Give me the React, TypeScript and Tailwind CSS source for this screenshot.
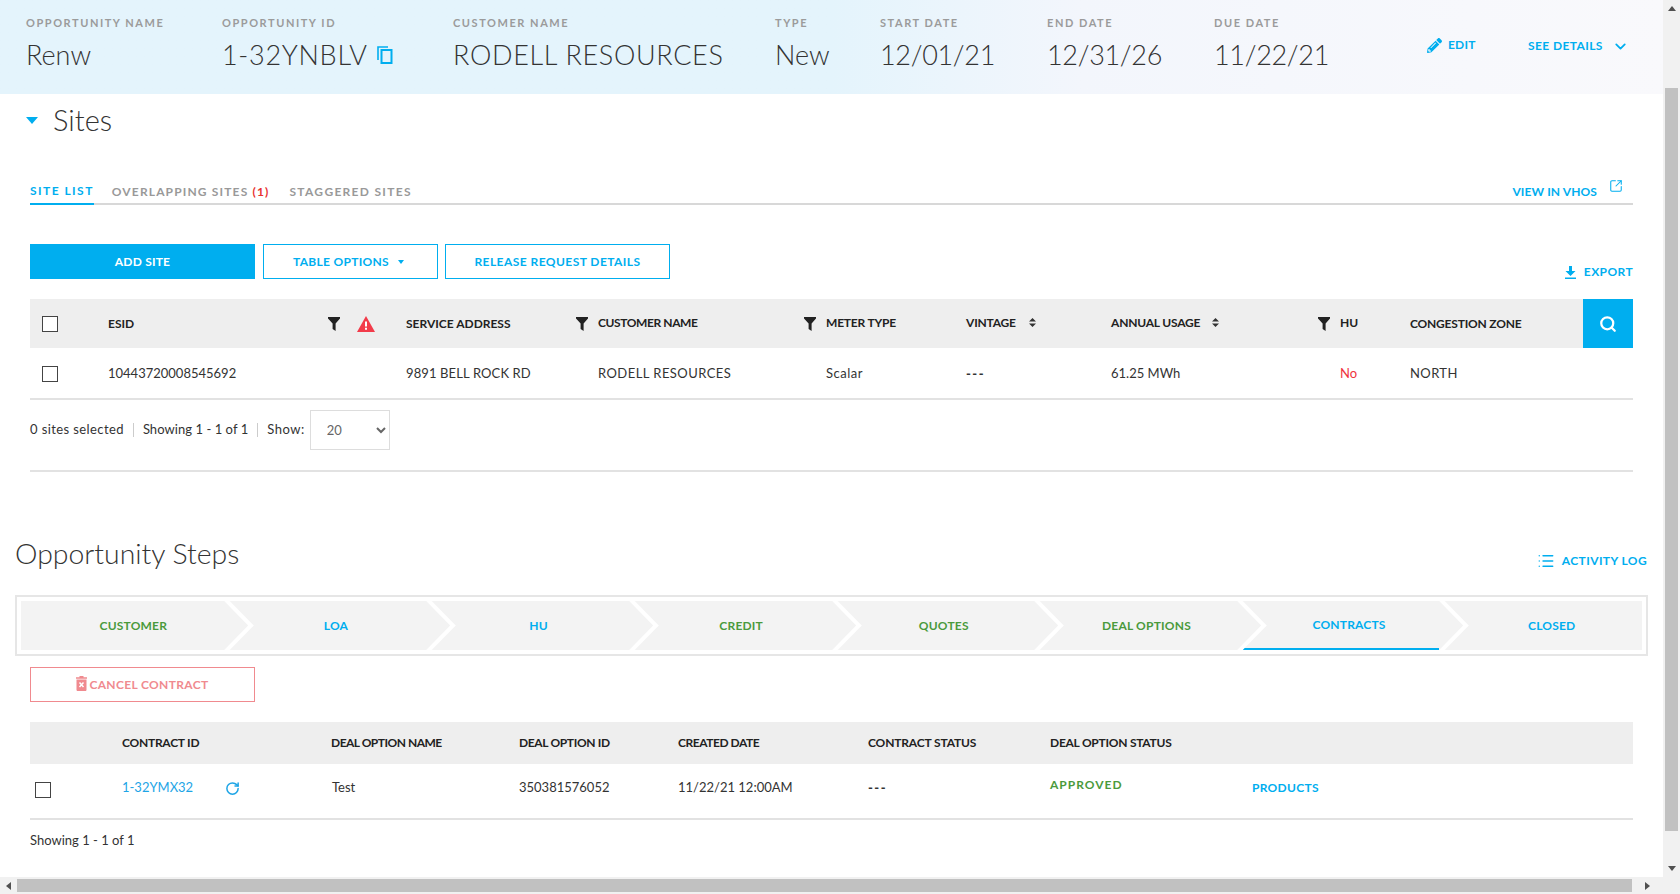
import React from 'react';
import { ChevronDown, List, RotateCw, Search, SquareArrowOutUpRight } from 'lucide-react';
import { FaPencilAlt } from 'react-icons/fa';

const summary = [
  { label: 'OPPORTUNITY NAME', value: 'Renw', cls: 'w-[196px]', track: '' },
  { label: 'OPPORTUNITY ID', value: '1-32YNBLV', cls: 'w-[231px]', track: 'tracking-[0.7px]', copy: true },
  { label: 'CUSTOMER NAME', value: 'RODELL RESOURCES', cls: 'w-[322px]', track: 'tracking-[0.67px]' },
  { label: 'TYPE', value: 'New', cls: 'w-[105px]', track: '' },
  { label: 'START DATE', value: '12/01/21', cls: 'w-[167px]', track: 'tracking-[-0.3px]' },
  { label: 'END DATE', value: '12/31/26', cls: 'w-[167px]', track: 'tracking-[-0.3px]' },
  { label: 'DUE DATE', value: '11/22/21', cls: 'w-[213px]', track: 'tracking-[-0.3px]' },
];

const steps = [
  { name: 'CUSTOMER', color: 'text-[#4a9a3c]' },
  { name: 'LOA', color: 'text-[#00aeef]' },
  { name: 'HU', color: 'text-[#00aeef]' },
  { name: 'CREDIT', color: 'text-[#4a9a3c]' },
  { name: 'QUOTES', color: 'text-[#4a9a3c]' },
  { name: 'DEAL OPTIONS', color: 'text-[#4a9a3c]' },
  { name: 'CONTRACTS', color: 'text-[#00aeef]', active: true },
  { name: 'CLOSED', color: 'text-[#00aeef]' },
];

const sitesGrid =
  'grid grid-cols-[78px_220px_29px_49px_170px_22px_206px_22px_140px_145px_207px_22px_70px_173px_50px] items-center';
const contractsGrid = 'grid grid-cols-[92px_210px_187px_159px_190px_182px_202px_1fr] items-center';

function Funnel() {
  return (
    <svg width="12" height="14" viewBox="0 0 12 14" className="text-[#222]">
      <path d="M0 0H12V1.6L7.6 6.6V14L4.6 12V6.6L0 1.6Z" fill="currentColor" />
    </svg>
  );
}

function SortArrows() {
  return (
    <svg width="7" height="9" viewBox="0 0 7 9" className="text-[#333]">
      <path d="M3.5 0L7 3.6H0ZM3.5 9L0 5.4H7Z" fill="currentColor" />
    </svg>
  );
}

function Box() {
  return <div className="w-4 h-4 border border-[#444] bg-white"></div>;
}

function Th({ children, className = '' }: { children?: React.ReactNode; className?: string }) {
  return <div className={`text-[12px] font-bold text-[#222] ${className}`}>{children}</div>;
}

export default function App() {
  return (
    <div className="w-[1680px] h-[894px] overflow-hidden flex flex-col bg-white font-['Lato',sans-serif] text-[#333]">
      <div className="flex flex-1 min-h-0">
        <div className="w-[1663px] shrink-0">
          {/* Opportunity summary */}
          <div className="h-[94px] flex pl-[26px] pt-4 bg-gradient-to-r from-[#e4f4fc] from-50% via-[#f3f6fc] via-65% to-[#f9f9fc]">
            {summary.map(item => (
              <div key={item.label} className={item.cls}>
                <div className="text-[11px] leading-[14px] font-bold tracking-[1.55px] text-[#9b9b9b]">{item.label}</div>
                <div className={`mt-[7px] flex items-center text-[27px] leading-[36px] font-light text-[#333] ${item.track}`}>
                  {item.value}
                  {item.copy && (
                    <svg width="16" height="18" viewBox="0 0 16 18" fill="none" className="ml-[9px] text-[#00aeef]">
                      <path d="M1 14V1H11" stroke="currentColor" strokeWidth="1.6" />
                      <rect x="4.5" y="4" width="10" height="13" stroke="currentColor" strokeWidth="2" />
                    </svg>
                  )}
                </div>
              </div>
            ))}
            <div className="flex items-center gap-[6px] w-[101px] h-[20px] mt-[19px] text-[12px] font-bold text-[#00aeef] tracking-[0.2px]">
              <FaPencilAlt className="w-[15px] h-[15px]" />
              EDIT
            </div>
            <div className="flex items-center gap-[9px] h-[20px] mt-[20px] text-[12px] font-bold text-[#00aeef] tracking-[0.4px]">
              SEE DETAILS
              <ChevronDown className="w-[17px] h-[17px] mt-[1px]" strokeWidth={2.5} />
            </div>
          </div>

          {/* Sites */}
          <div className="flex items-center h-[40px] mt-[6px] pl-[26px]">
            <svg width="12" height="7" viewBox="0 0 12 7" className="text-[#00aeef]">
              <path d="M0 0H12L6 7Z" fill="currentColor" />
            </svg>
            <span className="ml-[15px] text-[29px] font-light text-[#333]">Sites</span>
          </div>

          <div className="ml-[30px] w-[1603px]">
            <div className="mt-[39px] h-[26px] flex items-end border-b-2 border-[#d8d8d8]">
              <div className="h-[26px] -mb-[2px] border-b-2 border-[#00aeef] text-[12px] leading-[24px] font-bold tracking-[1.45px] text-[#00aeef]">
                SITE LIST
              </div>
              <div className="ml-[18px] h-[26px] text-[12px] leading-[30px] font-bold tracking-[1.15px] text-[#999]">
                OVERLAPPING SITES <span className="text-[#e8312f]">(1)</span>
              </div>
              <div className="ml-[20px] h-[26px] text-[12px] leading-[30px] font-bold tracking-[1.3px] text-[#999]">
                STAGGERED SITES
              </div>
              <div className="ml-auto h-[26px] flex items-start pr-[10px] gap-[12px] text-[12px] leading-[30px] font-bold tracking-[0.1px] text-[#00aeef]">
                VIEW IN VHOS
                <SquareArrowOutUpRight className="w-[14px] h-[14px] mt-[2px]" strokeWidth={1.8} />
              </div>
            </div>

            <div className="mt-[39px] flex items-start">
              <div className="w-[225px] h-[35px] flex items-center justify-center bg-[#00aeef] text-white text-[12px] font-bold tracking-[0.2px]">
                ADD SITE
              </div>
              <div className="ml-[8px] w-[175px] h-[35px] flex items-center justify-center gap-[9px] border border-[#00aeef] pr-[4px] text-[#00aeef] text-[12px] font-bold tracking-[0.3px]">
                TABLE OPTIONS
                <svg width="6" height="4" viewBox="0 0 6 4" className="text-[#00aeef]">
                  <path d="M0 0H6L3 4Z" fill="currentColor" />
                </svg>
              </div>
              <div className="ml-[7px] w-[225px] h-[35px] flex items-center justify-center border border-[#00aeef] text-[#00aeef] text-[12px] font-bold tracking-[0.45px]">
                RELEASE REQUEST DETAILS
              </div>
              <div className="ml-auto mt-[19px] flex items-center gap-[8px] text-[12px] leading-[18px] font-bold text-[#00aeef] tracking-[0.4px]">
                <svg width="11" height="13" viewBox="0 0 11 13" className="text-[#00aeef]">
                  <path d="M4 0H7V5H10.5L5.5 10L0.5 5H4ZM0 11.6H11V13H0Z" fill="currentColor" />
                </svg>
                EXPORT
              </div>
            </div>

            {/* Sites table */}
            <div className={`mt-[18px] h-[49px] bg-[#eeeeee] ${sitesGrid}`}>
              <div className="pl-3"><Box /></div>
              <Th>ESID</Th>
              <Funnel />
              <svg width="18" height="16" viewBox="0 0 18 16">
                <path d="M9 0L18 16H0Z" fill="#f23b4a" />
                <path d="M8 5.5H10V10.5H8ZM8 11.8H10V13.8H8Z" fill="#ffffff" />
              </svg>
              <Th>SERVICE ADDRESS</Th>
              <Funnel />
              <Th className="-mt-[2px] tracking-[-0.4px]">CUSTOMER NAME</Th>
              <Funnel />
              <Th className="-mt-[2px] tracking-[-0.2px]">METER TYPE</Th>
              <Th className="-mt-[2px] flex items-center gap-[13px] tracking-[-0.2px]">VINTAGE <SortArrows /></Th>
              <Th className="-mt-[2px] flex items-center gap-[12px] tracking-[-0.2px]">ANNUAL USAGE <SortArrows /></Th>
              <Funnel />
              <Th className="-mt-[2px]">HU</Th>
              <Th className="tracking-[-0.2px]">CONGESTION ZONE</Th>
              <div className="h-[49px] flex items-center justify-center bg-[#00aeef] text-white">
                <Search className="w-[18px] h-[18px]" strokeWidth={3} />
              </div>
            </div>
            <div className={`h-[52px] pt-[2px] border-b-2 border-[#e2e2e2] text-[13px] text-[#333] ${sitesGrid}`}>
              <div className="pl-3"><Box /></div>
              <div className="col-span-3">10443720008545692</div>
              <div className="col-span-2 tracking-[0.12px]">9891 BELL ROCK RD</div>
              <div className="col-span-2 tracking-[0.45px]">RODELL RESOURCES</div>
              <div className="tracking-[0.5px]">Scalar</div>
              <div className="font-black tracking-[1.5px]">---</div>
              <div className="col-span-2">61.25 MWh</div>
              <div className="text-[#ef3340]">No</div>
              <div className="col-span-2 tracking-[0.4px]">NORTH</div>
            </div>

            <div className="h-[72px] pb-[10px] flex items-center border-b-2 border-[#e2e2e2] text-[13px] text-[#333]">
              <span className="tracking-[0.4px]">0 sites selected</span>
              <span className="mx-[9px] h-[14px] border-l border-[#ccc]"></span>
              <span className="tracking-[0.05px]">Showing 1 - 1 of 1</span>
              <span className="mx-[9px] h-[14px] border-l border-[#ccc]"></span>
              <span className="tracking-[0.5px]">Show:</span>
              <select defaultValue="20" className="ml-[5px] w-[80px] h-[40px] pl-[12px] rounded-none border border-[#ddd] bg-white text-[13px] text-[#666] outline-none">
                <option value="20">20</option>
              </select>
            </div>
          </div>

          {/* Opportunity steps */}
          <div className="mt-[61px] ml-[15px] w-[1632px] h-[40px] flex items-center justify-between">
            <span className="text-[28.4px] font-light text-[#333]">Opportunity Steps</span>
            <span className="flex items-center gap-[7px] mt-[16px] text-[12px] font-bold text-[#00aeef] tracking-[0.4px]">
              <List className="w-[18px] h-[18px]" strokeWidth={1.8} />
              ACTIVITY LOG
            </span>
          </div>

          <div className="mt-[22px] ml-[15px] w-[1633px] h-[61px] border-2 border-[#e6e6e6] p-[4px] flex">
            {steps.map((step, i) => (
              <div key={step.name} className="relative flex-1 h-[49px] bg-[#f3f3f3] flex items-center justify-center pl-[22px]">
                <span className={`text-[12px] font-bold tracking-[0.2px] ${step.color} ${step.active ? '-mt-[2px]' : ''}`}>{step.name}</span>
                {step.active && <div className="absolute left-[6px] right-0 bottom-0 h-[2px] bg-[#00aeef]"></div>}
                {i < steps.length - 1 && (
                  <svg width="34" height="49" viewBox="0 0 34 49" className="absolute top-0 left-full -ml-[1px] z-10">
                    <path d="M2 -2L28 24.5L2 51" fill="none" stroke="#ffffff" strokeWidth="4" />
                  </svg>
                )}
              </div>
            ))}
          </div>

          <div className="ml-[30px] w-[1603px]">
            <div className="mt-[11px] w-[225px] h-[35px] flex items-center justify-center gap-[2px] border border-[#f08a8f] text-[#f08a8f] text-[12px] font-bold tracking-[0.35px]">
              <svg width="11" height="15" viewBox="0 0 11 15" className="-mt-[2px] text-[#f08a8f]">
                <path d="M3.5 0H7.5V1.2H11V2.8H0V1.2H3.5ZM0.5 3.6H10.5V14.2L9.8 15H1.2L0.5 14.2Z" fill="currentColor" />
                <path d="M3.5 6.6L7.5 11M7.5 6.6L3.5 11" stroke="#ffffff" strokeWidth="1.5" />
              </svg>
              CANCEL CONTRACT
            </div>

            {/* Contracts table */}
            <div className={`mt-[20px] h-[42px] bg-[#eeeeee] ${contractsGrid}`}>
              <div></div>
              <Th className="tracking-[-0.25px]">CONTRACT ID</Th>
              <Th className="-ml-[1px] tracking-[-0.5px]">DEAL OPTION NAME</Th>
              <Th className="tracking-[-0.35px]">DEAL OPTION ID</Th>
              <Th className="tracking-[-0.45px]">CREATED DATE</Th>
              <Th className="tracking-[-0.15px]">CONTRACT STATUS</Th>
              <Th className="tracking-[-0.25px]">DEAL OPTION STATUS</Th>
              <div></div>
            </div>
            <div className={`h-[56px] pb-[7px] border-b-2 border-[#e2e2e2] text-[13px] text-[#333] ${contractsGrid}`}>
              <div className="pl-[5px] mt-[5px]"><Box /></div>
              <div className="flex items-center gap-[32px] text-[#1ea5e6]">
                1-32YMX32
                <RotateCw className="w-[15px] h-[15px] mt-[2px]" strokeWidth={2.4} />
              </div>
              <div>Test</div>
              <div>350381576052</div>
              <div>11/22/21 12:00AM</div>
              <div className="font-black tracking-[1.5px]">---</div>
              <div className="-mt-[5px] text-[12px] font-bold tracking-[1px] text-[#4a9a3c]">APPROVED</div>
              <div className="text-[12px] font-bold tracking-[0.3px] text-[#00aeef]">PRODUCTS</div>
            </div>
            <div className="mt-[11px] text-[13px] leading-[18px] text-[#333]">Showing 1 - 1 of 1</div>
          </div>
        </div>

        {/* Vertical scrollbar */}
        <div className="w-[17px] flex flex-col items-center bg-[#f1f1f1]">
          <div className="h-[17px] flex items-center justify-center">
            <svg width="8" height="5" viewBox="0 0 8 5"><path d="M4 0L8 5H0Z" fill="#505050" /></svg>
          </div>
          <div className="mt-[71px] w-[13px] h-[743px] bg-[#c1c1c1]"></div>
          <div className="mt-auto h-[17px] flex items-center justify-center">
            <svg width="8" height="5" viewBox="0 0 8 5"><path d="M0 0H8L4 5Z" fill="#505050" /></svg>
          </div>
        </div>
      </div>

      {/* Horizontal scrollbar */}
      <div className="h-[17px] shrink-0 flex items-center bg-[#f1f1f1]">
        <div className="w-[17px] flex items-center justify-center">
          <svg width="5" height="8" viewBox="0 0 5 8"><path d="M5 0V8L0 4Z" fill="#505050" /></svg>
        </div>
        <div className="w-[1615px] h-[13px] bg-[#c1c1c1]"></div>
        <div className="w-[31px] flex items-center justify-center">
          <svg width="5" height="8" viewBox="0 0 5 8"><path d="M0 0L5 4L0 8Z" fill="#505050" /></svg>
        </div>
      </div>
    </div>
  );
}
